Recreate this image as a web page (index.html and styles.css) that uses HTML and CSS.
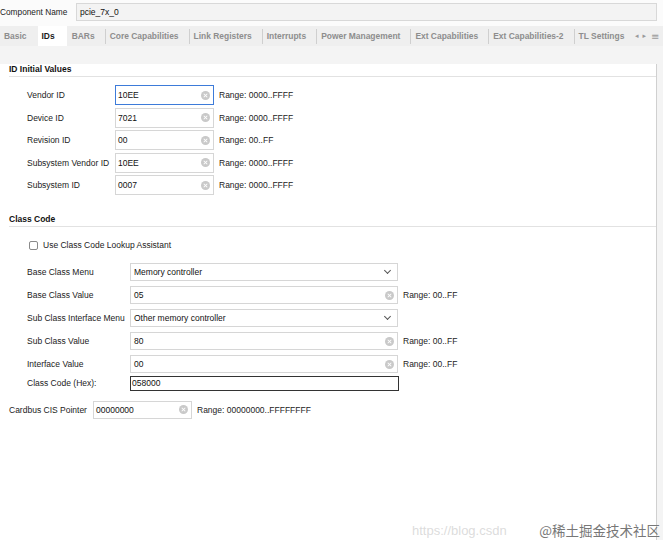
FILE: index.html
```html
<!DOCTYPE html>
<html lang="en">
<head>
  <meta charset="UTF-8" />
  <title>pcie_7x_0 - IDs</title>
  <link rel="stylesheet" href="styles.css">
</head>
<body>

  <div class="top">
    <span class="top-label">Component Name</span>
    <div class="name-box">pcie_7x_0</div>
  </div>

  <div class="tabs">
    <div class="tab-list">
      <span class="tab first">Basic</span>
      <span class="tab active">IDs</span>
      <span class="tab bars">BARs</span>
      <span class="tab sep">Core Capabilities</span>
      <span class="tab sep">Link Registers</span>
      <span class="tab sep">Interrupts</span>
      <span class="tab sep">Power Management</span>
      <span class="tab sep">Ext Capabilities</span>
      <span class="tab sep">Ext Capabilities-2</span>
      <span class="tab sep last">TL Settings</span>
    </div>
    <div class="tab-ctrl">
      <span>&#9666;</span>
      <span>&#9656;</span>
      <span class="menu">&#8801;</span>
    </div>
  </div>

  <div class="panel">
    <div class="section-title first">ID Initial Values</div>

    <div class="rows">
      <div class="row">
        <span class="label">Vendor ID</span>
        <div class="field focused"><span>10EE</span><i class="clear"></i></div>
        <span class="range">Range: 0000..FFFF</span>
      </div>
      <div class="row">
        <span class="label">Device ID</span>
        <div class="field"><span>7021</span><i class="clear"></i></div>
        <span class="range">Range: 0000..FFFF</span>
      </div>
      <div class="row">
        <span class="label">Revision ID</span>
        <div class="field"><span>00</span><i class="clear"></i></div>
        <span class="range">Range: 00..FF</span>
      </div>
      <div class="row">
        <span class="label">Subsystem Vendor ID</span>
        <div class="field"><span>10EE</span><i class="clear"></i></div>
        <span class="range">Range: 0000..FFFF</span>
      </div>
      <div class="row">
        <span class="label">Subsystem ID</span>
        <div class="field"><span>0007</span><i class="clear"></i></div>
        <span class="range">Range: 0000..FFFF</span>
      </div>
    </div>

    <div class="section-title">Class Code</div>

    <label class="check-row">
      <span class="checkbox"></span>
      <span>Use Class Code Lookup Assistant</span>
    </label>

    <div class="class-rows">
      <div class="crow">
        <span class="clabel">Base Class Menu</span>
        <div class="wide select"><span>Memory controller</span><i class="chev"></i></div>
      </div>
      <div class="crow">
        <span class="clabel">Base Class Value</span>
        <div class="wide"><span>05</span><i class="clear"></i></div>
        <span class="range">Range: 00..FF</span>
      </div>
      <div class="crow">
        <span class="clabel">Sub Class Interface Menu</span>
        <div class="wide select"><span>Other memory controller</span><i class="chev"></i></div>
      </div>
      <div class="crow">
        <span class="clabel">Sub Class Value</span>
        <div class="wide"><span>80</span><i class="clear"></i></div>
        <span class="range">Range: 00..FF</span>
      </div>
      <div class="crow">
        <span class="clabel">Interface Value</span>
        <div class="wide"><span>00</span><i class="clear"></i></div>
        <span class="range">Range: 00..FF</span>
      </div>
      <div class="crow hex">
        <span class="clabel">Class Code (Hex):</span>
        <div class="hex-box">058000</div>
      </div>
    </div>

    <div class="cardbus">
      <span class="cb-label">Cardbus CIS Pointer</span>
      <div class="field"><span>00000000</span><i class="clear"></i></div>
      <span class="range">Range: 00000000..FFFFFFFF</span>
    </div>
  </div>

  <div class="footer"></div>

  <span class="wm-url">https://blog.csdn</span>
  <span class="wm-site">@稀土掘金技术社区</span>

</body>
</html>
```

FILE: styles.css
```css
* { box-sizing: border-box; margin: 0; padding: 0; }

html, body {
  height: 100%;
}

body {
  position: relative;
  background-color: #f4f4f4;
  font-family: 'Liberation Sans', Arial, sans-serif;
  font-size: 8.5px;
  color: #222;
  overflow: hidden;
}

/* component name */

.top {
  display: flex;
  align-items: center;
  height: 26px;
  padding: 2px 6px 4px 0;
  background-color: #fbfbfb;
}

.top-label {
  width: 76px;
  font-size: 8.3px;
  color: #222;
}

.name-box {
  flex-grow: 1;
  height: 18px;
  line-height: 16px;
  padding-left: 3px;
  border: 1px solid #d8d8d8;
  background-color: #f3f3f3;
  color: #111;
}

/* tab strip */

.tabs {
  display: flex;
  height: 20px;
  background-color: #efefef;
}

.tab-list {
  flex-grow: 1;
  min-width: 0;
  display: flex;
  overflow: hidden;
  white-space: nowrap;
}

.tab {
  display: flex;
  align-items: center;
  flex-shrink: 0;
  padding: 0 10px 0 5px;
  font-weight: bold;
  font-size: 8.45px;
  color: #8d8d8d;
}

.tab.first {
  padding: 0 11px 0 4px;
}

.tab.active {
  padding: 0 12px 0 4px;
  background-color: #fff;
  color: #1a1a1a;
}

.tab.bars {
  padding: 0 10px 0 5px;
}

.tab.last {
  padding-right: 0;
}

.tab.sep {
  position: relative;
}

.tab.sep::before {
  content: "";
  position: absolute;
  left: 0;
  top: 3px;
  bottom: 2px;
  border-left: 1px solid #cfcfcf;
}

.tab-ctrl {
  display: flex;
  align-items: center;
  flex-shrink: 0;
  gap: 4px;
  width: 31px;
  padding-left: 3px;
  color: #9a9a9a;
  font-family: 'DejaVu Sans', sans-serif;
  font-size: 7px;
}

.tab-ctrl .menu {
  font-size: 10px;
  margin-left: 1px;
}

/* panel */

.panel {
  height: 479px;
  width: 657px;
  padding: 0 0 0 9px;
  background-color: #fff;
  border-right: 1px solid #d0d0d0;
  border-bottom: 2px solid #d6d6d6;
}

.section-title {
  margin-top: 19px;
  line-height: 11px;
  padding-bottom: 1px;
  border-bottom: 1px solid #e2e2e2;
  font-weight: bold;
  color: #111;
}

.section-title.first {
  margin-top: 18px;
}

.rows {
  display: flex;
  flex-direction: column;
  gap: 2.5px;
  margin-top: 8px;
  padding-left: 18px;
}

.row, .cardbus {
  display: flex;
  align-items: center;
  height: 20px;
}

.label {
  width: 88px;
  color: #222;
}

.field {
  display: flex;
  align-items: center;
  justify-content: space-between;
  width: 99px;
  height: 100%;
  padding: 0 3px 0 2px;
  border: 1px solid #d6d6d6;
  background-color: #fff;
  color: #111;
}

.field.focused {
  border-color: #3d7bd9;
}

.clear {
  position: relative;
  width: 9px;
  height: 9px;
  border-radius: 50%;
  background-color: #c9c9c9;
}

.clear::before, .clear::after {
  content: "";
  position: absolute;
  left: 4px;
  top: 2px;
  width: 1px;
  height: 5px;
  background-color: #fff;
  transform: rotate(45deg);
}

.clear::after {
  transform: rotate(-45deg);
}

.range {
  margin-left: 5px;
  color: #222;
}

/* class code */

.check-row {
  display: flex;
  align-items: center;
  gap: 5px;
  height: 12px;
  margin-top: 12px;
  padding-left: 20px;
}

.checkbox {
  width: 9px;
  height: 9px;
  border: 1px solid #8a8a8a;
  border-radius: 2px;
  background-color: #fff;
}

.class-rows {
  display: flex;
  flex-direction: column;
  gap: 5px;
  margin-top: 12px;
  padding-left: 18px;
}

.crow {
  display: flex;
  align-items: center;
  height: 18px;
}

.clabel {
  width: 103px;
}

.wide {
  display: flex;
  align-items: center;
  justify-content: space-between;
  width: 268px;
  height: 100%;
  padding: 0 3px 0 3px;
  border: 1px solid #d6d6d6;
  color: #111;
}

.select {
  padding-right: 7px;
}

.chev {
  width: 5px;
  height: 5px;
  margin-top: -3px;
  border-right: 1px solid #555;
  border-bottom: 1px solid #555;
  transform: rotate(45deg);
}

.crow.hex {
  height: 15px;
  margin-top: -2.5px;
}

.hex-box {
  width: 269px;
  height: 100%;
  line-height: 13px;
  padding-left: 1px;
  border: 1px solid #333;
  color: #111;
}

.cardbus {
  height: 18px;
  margin-top: 10px;
}

.cb-label {
  width: 84px;
}

/* bottom strip and watermark */

.footer {
  height: 15px;
}

.wm-url {
  position: absolute;
  left: 412px;
  bottom: 2px;
  font-size: 13px;
  color: rgba(190, 190, 190, 0.55);
}

.wm-site {
  position: absolute;
  right: 3px;
  bottom: 2px;
  font-family: 'Noto Sans CJK SC', sans-serif;
  font-size: 13.5px;
  line-height: 16px;
  color: #777;
}
```
